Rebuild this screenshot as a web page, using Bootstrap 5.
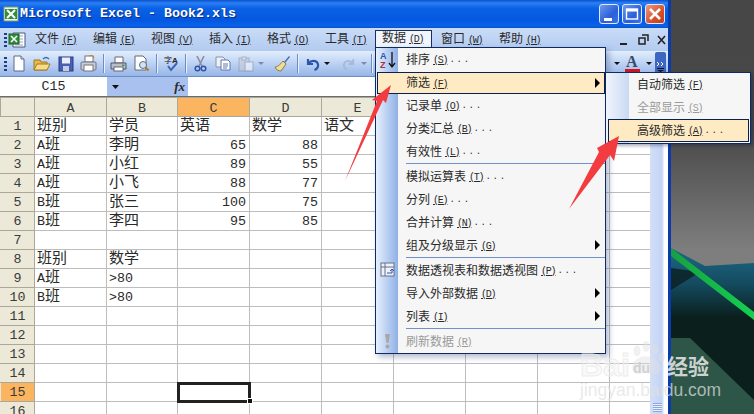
<!DOCTYPE html>
<html lang="zh">
<head>
<meta charset="utf-8">
<title>Microsoft Excel - Book2.xls</title>
<link href="https://cdn.jsdelivr.net/npm/bootstrap@5.3.0/dist/css/bootstrap.min.css" rel="stylesheet">
<style>
html,body{margin:0;height:414px;overflow:hidden}
body{font-family:"Liberation Mono","Noto Sans CJK SC",monospace;color:#2a2a2a;background:#4a4a4a;font-size:12px}
.xl-desk{width:754px;height:414px;overflow:hidden;background:linear-gradient(180deg,#474747 0,#484848 130px,#7e7e7e 250px)}
.xl-bgart{left:0;top:0}
.xl-win{width:671px;height:414px;background:#0b3ba8;padding-right:3px}
.xl-title{height:28px;background:linear-gradient(180deg,#0a50cf 0,#2a80f2 3px,#0b62e6 8px,#0557e0 20px,#0a62ea 26px,#0b4fc4 28px);color:#fff;font-weight:700;font-size:13.33px;text-shadow:1px 1px 1px #0a2a80;padding-left:3px}
.xl-title svg.xl-app{margin-right:1px}
.xl-wbtn{width:20px;height:20px;border-radius:3px;border:1px solid #dfeafc;margin-right:3px;background:linear-gradient(135deg,#6f99ee,#2a5fd8 60%,#3f74e6)}
.xl-wclose{background:linear-gradient(135deg,#ee9a80,#d8502a 60%,#c43c18)}
.xl-body{background:#fff}
.xl-menubar{height:23px;background:linear-gradient(180deg,#c9dcf8,#b3cbf0);font-size:12px;padding-left:8px}
.xl-doc{margin-right:9px}
.xl-grip{width:3px;height:15px;background:repeating-linear-gradient(180deg,#1d3f80 0,#1d3f80 2px,transparent 2px,transparent 4px)}
.xl-mgrip{left:4px;top:33px}
.xl-tgrip{left:4px;top:57px}
.xl-mi{width:58px;white-space:nowrap}
.xl-mi-active{width:57px;margin-left:-8px;margin-right:9px;height:18px;margin-top:2px;margin-bottom:auto;background:#f2f5fb;border:1px solid #17305f;border-bottom:0;position:relative;z-index:3;line-height:16px;padding-left:6px;white-space:nowrap}
.xl-k{font-size:10px;text-decoration:underline;margin-left:3px;letter-spacing:-1.2px}
.xl-dots{letter-spacing:1.8px;font-size:9px;margin-left:2px}
.xl-toolbar{height:26px;background:linear-gradient(180deg,#e2edfc,#c0d5f5 45%,#97b5e6);padding-left:7px;border-bottom:1px solid #6f8dc5}
.xl-t23{width:23px;height:20px}
.xl-t24{width:24px;height:20px}
.xl-t22{width:22px;height:20px}
.xl-d{width:8px;height:20px}
.xl-sep{width:1px;height:19px;background:#6f8dc5;box-shadow:1px 0 0 #e8f0fd}
.xl-sl{margin-left:3px;margin-right:3px}
.xl-gapb{margin-left:6px}
.xl-right{margin-left:auto}
.xl-over{width:11px;height:24px;background:#3d66c0;margin-left:3px;margin-right:2px;border-radius:2px}
.xl-fbar{height:20px;border-bottom:1px solid #6b6b6b;background:#fff}
.xl-name{width:107px;font-size:13.33px;line-height:20px;text-align:center}
.xl-fbtn{width:81px;background:#a9c1ee;height:19px}
.xl-fx{font-family:"Liberation Serif",serif;font-size:13px;margin-right:3px;margin-left:auto}
.xl-sheet-wrap{height:317px;overflow:hidden;width:650px;flex:none}
table.xl-sheet{table-layout:fixed;width:681px;border-collapse:collapse;margin:0;background:#fff}
table.xl-sheet col{width:72px}
table.xl-sheet col.xl-c0{width:34px}
table.xl-sheet col.xl-cb{width:71px}
table.xl-sheet tr{height:19px}
table.xl-sheet td,table.xl-sheet th{height:19px;padding:2px 3px 0 2px;border:1px solid #bdbdbd;font-size:15px;font-weight:400;line-height:15px;white-space:nowrap;overflow:hidden;background:#fff;color:#2a2a2a;box-shadow:none}
table.xl-sheet th{background:#ece9d8;border-color:#aca899;font-size:13.33px;text-align:center;padding:2px 0 0;color:#3a3a3a}
table.xl-sheet th.xl-hot{background:#fbb561}
table.xl-sheet tbody th{border-color:#c9c6b6 #aca899 #aca899 #ece9d8}
table.xl-sheet td.xl-num{font-size:13.33px;text-align:right}
table.xl-sheet td.xl-c15{outline:3px solid #222;outline-offset:-2px}
.xl-lat{font-size:13.33px;line-height:13px}
.xl-handle{left:247px;top:398px;width:6px;height:6px;background:#111;border:1px solid #fff}
.xl-scroll{width:17px;background:linear-gradient(90deg,#d3dff7,#c3d3f5 70%,#fff 85%);position:relative}
.xl-scroll i{position:absolute;left:3px;bottom:2px;width:9px;height:9px;background:repeating-linear-gradient(180deg,#8aa6dc 0,#8aa6dc 1px,#eaf1fd 1px,#eaf1fd 2px)}
.xl-menu{background:#f6f6f6;border:1px solid #0d2a63;box-shadow:3px 3px 6px rgba(60,80,130,.4);z-index:5;font-size:12px;margin:0;padding:0;list-style:none}
.xl-data{left:375px;top:47px;width:231px;height:307px;background:linear-gradient(90deg,#e6f0fd 0,#8fb0e6 22px,#f6f6f6 22px)}
.xl-sub{left:605px;top:72px;width:146px;height:72px;background:linear-gradient(90deg,#f0f5fd 0,#c9d9f2 23px,#f6f6f6 23px);box-shadow:2px 2px 3px rgba(20,30,70,.35);z-index:6}
.xl-it{height:23px;padding-left:30px;padding-top:2px;white-space:nowrap;position:relative}
.xl-it svg.xl-ic{position:absolute;left:3px;top:2px}
.xl-sub .xl-it{padding-left:31px}
.xl-hl{background:#feebc4;outline:1px solid #0a1f52;outline-offset:-1px}
.xl-hl-main{height:22px;margin-top:1px;margin-right:0;margin-left:1px;padding-left:29px}
.xl-sub .xl-hl-sub{height:23px;margin:0 1px 0 2px;padding-left:29px}
.xl-dim{color:#9a9a9a}
.xl-tri{position:absolute;right:5px;top:6px;width:0;height:0;border-left:5px solid #000;border-top:5px solid transparent;border-bottom:5px solid transparent}
.xl-hr{height:2px;margin-left:30px;border-top:1px solid #7390c8}
.xl-arrow{left:0;top:0;z-index:8;pointer-events:none}
.xl-mark{left:578px;top:352px;z-index:9;width:170px;height:50px;color:#fff;font-family:"Liberation Sans",sans-serif;pointer-events:none}
.xl-bai{left:2px;top:-3px;font-size:32px;font-weight:700;color:rgba(240,240,240,.35);-webkit-text-stroke:1px rgba(235,235,235,.9);line-height:32px}
.xl-du{left:55px;top:9px;font-size:14px;font-weight:700;color:rgba(205,205,205,.9);line-height:14px}
.xl-jy{left:89px;top:0;font-family:"Noto Sans CJK SC",sans-serif;font-weight:700;font-size:21px;line-height:26px;color:rgba(235,235,235,.85)}
.xl-url{left:2px;top:28px;font-size:17.5px;line-height:20px;color:rgba(225,225,225,.72)}
.xl-paw{left:49px;top:-12px}
</style>
</head>
<body>
<div class="xl-desk position-relative">
  <svg class="xl-bgart position-absolute" width="754" height="414" viewBox="0 0 754 414">
    <defs>
      <linearGradient id="teal" x1="0" y1="0" x2="0" y2="1"><stop offset="0" stop-color="#1f6a88"/><stop offset=".22" stop-color="#134a5e"/><stop offset=".42" stop-color="#0b1f1c"/><stop offset="1" stop-color="#0b1f1c"/></linearGradient>
      <linearGradient id="glow" x1="0" y1="0" x2="1" y2="0"><stop offset="0" stop-color="#17a040"/><stop offset="1" stop-color="#14d050"/></linearGradient>
    </defs>
    <polygon points="671,248 705,266 754,263 754,414 671,414" fill="url(#teal)"/>
    <polygon points="671,268 700,272 671,290" fill="#0b1f22" opacity=".8"/>
    <polygon points="671,338 690,338 754,400 754,414 671,414" fill="#2d5648"/>
    <polygon points="671,248 754,312 754,320 671,256" fill="url(#glow)"/>
  </svg>
  <div class="xl-win position-relative d-flex flex-column">
    <div class="xl-title d-flex align-items-center flex-shrink-0">
      <svg class="xl-app" width="16" height="16" viewBox="0 0 16 16"><rect x="1" y="1" width="14" height="14" fill="#f3f3e6" stroke="#7f9a70"/><rect x="2" y="3" width="12" height="10" fill="#2f8f3a"/><path d="M4 4l8 8M12 4l-8 8" stroke="#fff" stroke-width="2"/></svg>
      <span>Microsoft Excel - Book2.xls</span>
      <div class="d-flex ms-auto">
        <div class="xl-wbtn d-flex align-items-end justify-content-center"><svg width="12" height="8" viewBox="0 0 12 8"><rect x="1" y="3" width="8" height="3" fill="#fff"/></svg></div>
        <div class="xl-wbtn d-flex align-items-center justify-content-center"><svg width="14" height="14" viewBox="0 0 14 14"><rect x="1.500" y="2" width="11" height="10" fill="none" stroke="#fff" stroke-width="1.400"/><rect x="1.500" y="2" width="11" height="2.500" fill="#fff"/></svg></div>
        <div class="xl-wbtn xl-wclose d-flex align-items-center justify-content-center"><svg width="14" height="14" viewBox="0 0 14 14"><path d="M2 2l10 10M12 2L2 12" stroke="#fff" stroke-width="2.600"/></svg></div>
      </div>
    </div>
    <div class="xl-body d-flex flex-column flex-grow-1">
      <div class="xl-grip position-absolute xl-mgrip"></div>
      <div class="xl-menubar d-flex align-items-center flex-shrink-0">
        <svg class="xl-doc flex-shrink-0" width="18" height="16" viewBox="0 0 18 16"><path d="M5 1h12v14H5z" fill="#fff" stroke="#4a5a80"/><path d="M7 4h8M7 7h8M7 10h8M7 13h8" stroke="#9aa6c0"/><rect x="1" y="2" width="10" height="10" fill="#2f8f3a" stroke="#1d5f28"/><path d="M3 4l6 6M9 4l-6 6" stroke="#fff" stroke-width="1.500"/></svg>
        <span class="xl-mi">文件<span class="xl-k">(F)</span></span>
        <span class="xl-mi">编辑<span class="xl-k">(E)</span></span>
        <span class="xl-mi">视图<span class="xl-k">(V)</span></span>
        <span class="xl-mi">插入<span class="xl-k">(I)</span></span>
        <span class="xl-mi">格式<span class="xl-k">(O)</span></span>
        <span class="xl-mi">工具<span class="xl-k">(T)</span></span>
        <span class="xl-mi-active">数据<span class="xl-k">(D)</span></span>
        <span class="xl-mi">窗口<span class="xl-k">(W)</span></span>
        <span class="xl-mi">帮助<span class="xl-k">(H)</span></span>
        <div class="d-flex align-items-center ms-auto">
          <svg width="56" height="14" viewBox="0 0 56 14"><rect x="8" y="10" width="7" height="2" fill="#222"/><path d="M27 5h6v6h-6zM30 2h6v6" fill="none" stroke="#222" stroke-width="1.500"/><path d="M46 3l7 8M53 3l-7 8" stroke="#222" stroke-width="1.600"/></svg>
        </div>
      </div>
      <div class="xl-grip position-absolute xl-tgrip"></div>
      <div class="xl-toolbar d-flex align-items-center flex-shrink-0">
        <span class="xl-t23 d-flex align-items-center justify-content-center"><svg width="16" height="17" viewBox="0 0 16 17"><path d="M3 1h7l3 3v12H3z" fill="#fff" stroke="#5b6b8a"/><path d="M10 1v3h3" fill="#dfe6f2" stroke="#5b6b8a"/></svg></span>
        <span class="xl-t24 d-flex align-items-center justify-content-center"><svg width="18" height="17" viewBox="0 0 18 17"><path d="M1 5h6l1 2h6v8H1z" fill="#e8b84a" stroke="#a07a20"/><path d="M1 15l3-6h13l-3 6z" fill="#f7dd8a" stroke="#a07a20"/><path d="M10 4q3-3 6 0" fill="none" stroke="#3a6cc0" stroke-width="1.400"/></svg></span>
        <span class="xl-t23 d-flex align-items-center justify-content-center"><svg width="16" height="16" viewBox="0 0 16 16"><rect x="1" y="1" width="14" height="14" fill="#4a5fb4" stroke="#2b3a80"/><rect x="4" y="1.500" width="8" height="6" fill="#e9eefa"/><rect x="5" y="10" width="6" height="5" fill="#c5cde0"/></svg></span>
        <span class="xl-t23 d-flex align-items-center justify-content-center"><svg width="17" height="17" viewBox="0 0 17 17"><rect x="5" y="1" width="8" height="6" fill="#fff" stroke="#777"/><rect x="1" y="7" width="15" height="8" rx="1" fill="#c7ccd6" stroke="#6a7488"/><rect x="4" y="10" width="9" height="6" fill="#fff" stroke="#777"/><path d="M9 1a3 3 0 0 1 5 2" stroke="#cc7a30" fill="none"/></svg></span>
        <span class="xl-sep xl-sl"></span>
        <span class="xl-t22 d-flex align-items-center justify-content-center"><svg width="17" height="16" viewBox="0 0 17 16"><path d="M5 1h8v6H5z" fill="#fff" stroke="#667"/><path d="M1 7h15v6H1z" fill="#b9bfca" stroke="#556"/><rect x="4" y="11" width="9" height="4" fill="#fff" stroke="#667"/><rect x="12" y="8.500" width="2.500" height="1.500" fill="#3aa04a"/></svg></span>
        <span class="xl-t24 d-flex align-items-center justify-content-center"><svg width="17" height="17" viewBox="0 0 17 17"><path d="M2 1h8l3 3v11H2z" fill="#fff" stroke="#667"/><circle cx="10" cy="10" r="3.500" fill="#cfe3f7" stroke="#5b6b8a"/><path d="M12.500 12.500l3 3" stroke="#b07a20" stroke-width="2"/></svg></span>
        <span class="xl-sep xl-sl"></span>
        <span class="xl-t22 d-flex align-items-center justify-content-center"><svg width="17" height="17" viewBox="0 0 17 17"><text x="1" y="8" font-size="8" font-family="Noto Sans CJK SC" fill="#222">字</text><text x="9" y="8" font-size="8" font-family="Liberation Sans" font-weight="700" fill="#222">A</text><path d="M5 11l3 4 6-7" fill="none" stroke="#3a64b8" stroke-width="2"/></svg></span>
        <span class="xl-sep xl-sl"></span>
        <span class="xl-t22 d-flex align-items-center justify-content-center"><svg width="13" height="17" viewBox="0 0 13 17"><path d="M3 1l5 10M10 1L5 11" stroke="#8a8f9a" stroke-width="1.600"/><circle cx="3.500" cy="13.500" r="2.300" fill="none" stroke="#2f54a8" stroke-width="1.500"/><circle cx="9.500" cy="13.500" r="2.300" fill="none" stroke="#2f54a8" stroke-width="1.500"/></svg></span>
        <span class="xl-t24 d-flex align-items-center justify-content-center"><svg width="16" height="15" viewBox="0 0 16 15"><path d="M1 1h7l2 2v8H1z" fill="#eef0f4" stroke="#8a94aa"/><path d="M6 4h7l2 2v8H6z" fill="#fff" stroke="#5c78b0"/><path d="M8 8h5M8 10h5M8 12h4" stroke="#5c78b0"/></svg></span>
        <span class="xl-t22 d-flex align-items-center justify-content-center"><svg width="16" height="16" viewBox="0 0 16 16" opacity=".55"><rect x="1" y="2" width="10" height="13" fill="#c9ccd6" stroke="#8a8fa0"/><rect x="4" y="1" width="4" height="3" fill="#e6e6ee" stroke="#8a8fa0"/><rect x="7" y="6" width="8" height="9" fill="#fff" stroke="#8a8fa0"/></svg></span>
        <span class="xl-d d-flex align-items-center justify-content-center"><svg width="6" height="4" viewBox="0 0 6 4"><path d="M0 0h6L3 3z" fill="#7c8aa8"/></svg></span>
        <span class="xl-t23 xl-gapb d-flex align-items-center justify-content-center"><svg width="17" height="17" viewBox="0 0 17 17"><path d="M10 7l5-6 1 1-5 6z" fill="#4a6ab8"/><path d="M9 6l3 3-5 7c-2 0-5-1-6-4 2 0 5-2 8-6z" fill="#f1dd98" stroke="#8a7a40"/></svg></span>
        <span class="xl-sep xl-sl"></span>
        <span class="xl-t22 d-flex align-items-center justify-content-center"><svg width="15" height="14" viewBox="0 0 15 14"><path d="M3 2v5h5M3.500 6.500C6 3 11 3 12.500 6s0 6-3 7" fill="none" stroke="#2c55ae" stroke-width="2.200"/></svg></span>
        <span class="xl-d d-flex align-items-center justify-content-center"><svg width="6" height="4" viewBox="0 0 6 4"><path d="M0 0h6L3 3z" fill="#111"/></svg></span>
        <span class="xl-t23 xl-gapb d-flex align-items-center justify-content-center"><svg width="14" height="14" viewBox="0 0 15 14"><path d="M12 2v5H7M11.500 6.500C9 3 4 3 2.500 6s0 6 3 7" fill="none" stroke="#a9b8d6" stroke-width="2"/></svg></span>
        <span class="xl-d d-flex align-items-center justify-content-center"><svg width="6" height="4" viewBox="0 0 6 4"><path d="M0 0h6L3 3z" fill="#7c8aa8"/></svg></span>
        <span class="xl-sep xl-sl"></span>
        <span class="xl-right d-flex align-items-center">
          <svg width="6" height="4" viewBox="0 0 6 4"><path d="M0 0h6L3 3z" fill="#111"/></svg>
          <svg class="ms-1" width="18" height="20" viewBox="0 0 18 20"><text x="2" y="13" font-family="Liberation Serif" font-weight="700" font-size="16" fill="#3a4a6a">A</text><rect x="1" y="15" width="15" height="4" fill="#d01420"/></svg>
          <svg class="ms-1" width="6" height="4" viewBox="0 0 6 4"><path d="M0 0h6L3 3z" fill="#111"/></svg>
          <span class="xl-over d-flex flex-column align-items-center justify-content-end pb-1"><svg width="7" height="10" viewBox="0 0 7 10"><path d="M0 0l2 2-2 2M4 0l2 2-2 2" stroke="#fff" fill="none"/><rect y="6" width="7" height="1" fill="#111"/><path d="M0 8h7L3.500 10z" fill="#111"/></svg></span>
        </span>
      </div>
      <div class="xl-fbar d-flex flex-shrink-0">
        <div class="xl-name">C15</div>
        <div class="xl-fbtn d-flex align-items-center">
          <svg class="ms-1" width="12" height="6" viewBox="0 0 12 6"><path d="M1 1h7L4.500 5z" fill="#111"/></svg>
          <span class="xl-fx fst-italic fw-bold">fx</span>
        </div>
        <div class="flex-grow-1"></div>
      </div>
      <div class="d-flex flex-grow-1">
        <div class="xl-sheet-wrap">
          <table class="table xl-sheet">
            <colgroup><col class="xl-c0"><col><col class="xl-cb"><col><col><col><col><col><col><col></colgroup>
            <thead><tr><th></th><th>A</th><th>B</th><th class="xl-hot">C</th><th>D</th><th>E</th><th></th><th></th><th></th><th></th></tr></thead>
            <tbody>
              <tr><th>1</th><td>班别</td><td>学员</td><td>英语</td><td>数学</td><td>语文</td><td></td><td></td><td></td><td></td></tr>
              <tr><th>2</th><td><span class="xl-lat">A</span>班</td><td>李明</td><td class="xl-num">65</td><td class="xl-num">88</td><td></td><td></td><td></td><td></td><td></td></tr>
              <tr><th>3</th><td><span class="xl-lat">A</span>班</td><td>小红</td><td class="xl-num">89</td><td class="xl-num">55</td><td></td><td></td><td></td><td></td><td></td></tr>
              <tr><th>4</th><td><span class="xl-lat">A</span>班</td><td>小飞</td><td class="xl-num">88</td><td class="xl-num">77</td><td></td><td></td><td></td><td></td><td></td></tr>
              <tr><th>5</th><td><span class="xl-lat">B</span>班</td><td>张三</td><td class="xl-num">100</td><td class="xl-num">75</td><td></td><td></td><td></td><td></td><td></td></tr>
              <tr><th>6</th><td><span class="xl-lat">B</span>班</td><td>李四</td><td class="xl-num">95</td><td class="xl-num">85</td><td></td><td></td><td></td><td></td><td></td></tr>
              <tr><th>7</th><td></td><td></td><td></td><td></td><td></td><td></td><td></td><td></td><td></td></tr>
              <tr><th>8</th><td>班别</td><td>数学</td><td></td><td></td><td></td><td></td><td></td><td></td><td></td></tr>
              <tr><th>9</th><td><span class="xl-lat">A</span>班</td><td><span class="xl-lat">&gt;80</span></td><td></td><td></td><td></td><td></td><td></td><td></td><td></td></tr>
              <tr><th>10</th><td><span class="xl-lat">B</span>班</td><td><span class="xl-lat">&gt;80</span></td><td></td><td></td><td></td><td></td><td></td><td></td><td></td></tr>
              <tr><th>11</th><td></td><td></td><td></td><td></td><td></td><td></td><td></td><td></td><td></td></tr>
              <tr><th>12</th><td></td><td></td><td></td><td></td><td></td><td></td><td></td><td></td><td></td></tr>
              <tr><th>13</th><td></td><td></td><td></td><td></td><td></td><td></td><td></td><td></td><td></td></tr>
              <tr><th>14</th><td></td><td></td><td></td><td></td><td></td><td></td><td></td><td></td><td></td></tr>
              <tr><th class="xl-hot">15</th><td></td><td></td><td class="xl-c15"></td><td></td><td></td><td></td><td></td><td></td><td></td></tr>
              <tr><th>16</th><td></td><td></td><td></td><td></td><td></td><td></td><td></td><td></td><td></td></tr>
            </tbody>
          </table>
        </div>
        <div class="xl-scroll flex-shrink-0"><i></i></div>
      </div>
    </div>
  </div>
  <div class="xl-handle position-absolute"></div>

  <ul class="xl-menu xl-data position-absolute">
    <li class="xl-it d-flex align-items-center"><svg class="xl-ic" width="18" height="19" viewBox="0 0 18 19"><text x="1" y="9" font-family="Liberation Sans" font-weight="700" font-size="9" fill="#2c55ae">A</text><text x="1" y="18" font-family="Liberation Sans" font-weight="700" font-size="9" fill="#a83040">Z</text><path d="M13 2v14M10 13l3 4 3-4" stroke="#111" fill="none" stroke-width="1.300"/></svg>排序<span class="xl-k">(S)</span><span class="xl-dots">...</span></li>
    <li class="xl-it xl-hl xl-hl-main d-flex align-items-center">筛选<span class="xl-k">(F)</span><span class="xl-tri"></span></li>
    <li class="xl-it d-flex align-items-center">记录单<span class="xl-k">(O)</span><span class="xl-dots">...</span></li>
    <li class="xl-it d-flex align-items-center">分类汇总<span class="xl-k">(B)</span><span class="xl-dots">...</span></li>
    <li class="xl-it d-flex align-items-center">有效性<span class="xl-k">(L)</span><span class="xl-dots">...</span></li>
    <li class="xl-hr"></li>
    <li class="xl-it d-flex align-items-center">模拟运算表<span class="xl-k">(T)</span><span class="xl-dots">...</span></li>
    <li class="xl-it d-flex align-items-center">分列<span class="xl-k">(E)</span><span class="xl-dots">...</span></li>
    <li class="xl-it d-flex align-items-center">合并计算<span class="xl-k">(N)</span><span class="xl-dots">...</span></li>
    <li class="xl-it d-flex align-items-center">组及分级显示<span class="xl-k">(G)</span><span class="xl-tri"></span></li>
    <li class="xl-hr"></li>
    <li class="xl-it d-flex align-items-center"><svg class="xl-ic" width="17" height="17" viewBox="0 0 17 17"><rect x="2" y="2" width="13" height="13" fill="#eef1f8" stroke="#66708c"/><path d="M2 6h13M6 2v13" stroke="#66708c"/><path d="M8 12h5v-4M11 10l2-2 2 2" fill="none" stroke="#2c55ae"/></svg>数据透视表和数据透视图<span class="xl-k">(P)</span><span class="xl-dots">...</span></li>
    <li class="xl-it d-flex align-items-center">导入外部数据<span class="xl-k">(D)</span><span class="xl-tri"></span></li>
    <li class="xl-it d-flex align-items-center">列表<span class="xl-k">(I)</span><span class="xl-tri"></span></li>
    <li class="xl-hr"></li>
    <li class="xl-it xl-dim d-flex align-items-center"><svg class="xl-ic" width="17" height="18" viewBox="0 0 17 18"><path d="M6 2h5l-1.500 9h-2z" fill="#a8a8a8"/><circle cx="8.500" cy="14.500" r="2" fill="#a8a8a8"/></svg>刷新数据<span class="xl-k">(R)</span></li>
  </ul>
  <ul class="xl-menu xl-sub position-absolute">
    <li class="xl-it d-flex align-items-center">自动筛选<span class="xl-k">(F)</span></li>
    <li class="xl-it xl-dim d-flex align-items-center">全部显示<span class="xl-k">(S)</span></li>
    <li class="xl-it xl-hl xl-hl-sub d-flex align-items-center">高级筛选<span class="xl-k">(A)</span><span class="xl-dots">...</span></li>
  </ul>

  <svg class="xl-arrow position-absolute" width="754" height="414" viewBox="0 0 754 414">
    <polygon points="345,181 377,101 372,100 391,85 386,103 383,100" fill="#f23c40"/>
    <polygon points="569,209 599,152 597,148 619,136 614,161 610,155" fill="#f23c40"/>
  </svg>

  <div class="xl-mark position-absolute">
    <svg class="xl-paw position-absolute" width="40" height="40" viewBox="0 0 44 44"><g fill="rgba(225,225,225,.45)"><ellipse cx="11" cy="12" rx="4" ry="6"/><ellipse cx="21" cy="7" rx="4" ry="6"/><ellipse cx="31" cy="10" rx="4" ry="6"/><ellipse cx="38" cy="19" rx="3.500" ry="5"/></g><path d="M6 28c2-7 8-10 15-10s13 3 16 10c2 7-4 10-9 9-4-1-9-1-13 0-6 1-11-3-9-9z" fill="rgba(225,225,225,.45)"/></svg>
    <span class="xl-bai position-absolute">Bai</span>
    <span class="xl-du position-absolute">du</span>
    <span class="xl-jy position-absolute">经验</span>
    <span class="xl-url position-absolute">jingyan.baidu.com</span>
  </div>
</div>
<script src="https://cdn.jsdelivr.net/npm/bootstrap@5.3.0/dist/js/bootstrap.bundle.min.js"></script>
</body>
</html>
